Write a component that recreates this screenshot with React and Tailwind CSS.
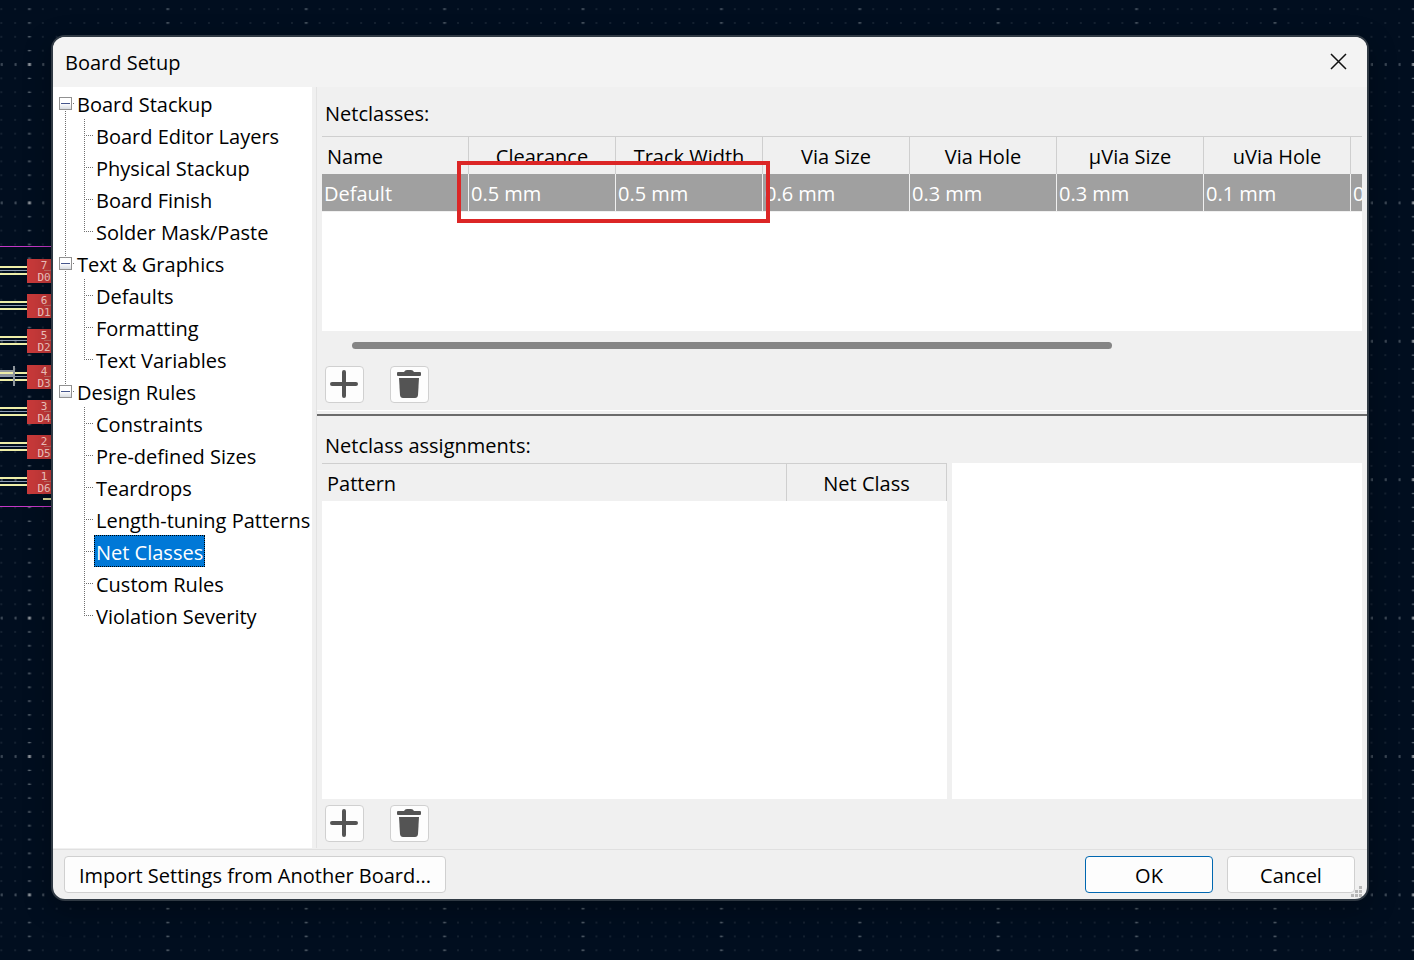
import React, { useState } from "react";

const treeData = [
  {
    title: "Board Stackup",
    items: [
      "Board Editor Layers",
      "Physical Stackup",
      "Board Finish",
      "Solder Mask/Paste",
    ],
  },
  {
    title: "Text & Graphics",
    items: ["Defaults", "Formatting", "Text Variables"],
  },
  {
    title: "Design Rules",
    items: [
      "Constraints",
      "Pre-defined Sizes",
      "Teardrops",
      "Length-tuning Patterns",
      "Net Classes",
      "Custom Rules",
      "Violation Severity",
    ],
  },
];

const netclassColumns = [
  { label: "Name", value: "Default" },
  { label: "Clearance", value: "0.5 mm" },
  { label: "Track Width", value: "0.5 mm" },
  { label: "Via Size", value: "0.6 mm" },
  { label: "Via Hole", value: "0.3 mm" },
  { label: "µVia Size", value: "0.3 mm" },
  { label: "uVia Hole", value: "0.1 mm" },
  { label: "", value: "0" },
];

const pads = [
  { pin: "7", net: "D0", y: 259 },
  { pin: "6", net: "D1", y: 294 },
  { pin: "5", net: "D2", y: 329 },
  { pin: "4", net: "D3", y: 365 },
  { pin: "3", net: "D4", y: 400 },
  { pin: "2", net: "D5", y: 435 },
  { pin: "1", net: "D6", y: 470 },
];

const steps = [1, 2, 3, 4, 5, 6, 7, 8, 9];
const PITCH = 13.84;

// PCB canvas behind the dialog
const BoardCanvas = () => (
  <svg aria-hidden="true" className="absolute inset-0 h-full w-full">
    <defs>
      <pattern
        id="minor"
        x="22.08"
        y="57.58"
        width={PITCH}
        height={PITCH}
        patternUnits="userSpaceOnUse"
      >
        <rect x="6.42" y="6.42" width="1" height="1" fill="#4b5764" />
      </pattern>
      <pattern
        id="major"
        x="22.5"
        y="58"
        width={PITCH * 10}
        height={PITCH * 10}
        patternUnits="userSpaceOnUse"
      >
        <rect x="5.5" y="5" width="3" height="3" fill="#8b9198" />
        {steps.map((s) => (
          <g key={s} fill="#66717c">
            <rect x="5.5" y={6 + s * PITCH} width="3" height="1" />
            <rect x={6.5 + s * PITCH} y="5" width="1" height="3" />
          </g>
        ))}
      </pattern>
    </defs>
    <rect width="100%" height="100%" fill="url(#minor)" />
    <rect width="100%" height="100%" fill="url(#major)" />
    <path d="M0 246.5H60M0 506.5H60" stroke="#c437c6" />
    <path d="M43 499H60" stroke="#dcdc9a" strokeWidth="2" />
    {pads.map((pad) => (
      <g key={pad.pin}>
        <path
          d={`M0 ${pad.y + 8}H27M0 ${pad.y + 15}H27`}
          stroke="#eeeea8"
          strokeWidth="2"
        />
        <path d={`M0 ${pad.y + 11.5}H27`} stroke="#8d9bb0" />
        <rect x="27" y={pad.y} width="26" height="24" fill="#c93a3a" />
        <path
          d={`M44 ${pad.y + 11.5}H50L53 ${pad.y + 10}`}
          stroke="#cf6f68"
          fill="none"
        />
        <g
          fill="#ffcfc8"
          fontFamily="DejaVu Sans Mono, monospace"
          fontSize="11"
          textAnchor="middle"
        >
          <text x="44" y={pad.y + 10}>
            {pad.pin}
          </text>
          <text x="44" y={pad.y + 22}>
            {pad.net}
          </text>
        </g>
      </g>
    ))}
    <path d="M0 371H14M14 366V386M0 375H14" stroke="#8f969c" strokeWidth="2" fill="none" />
  </svg>
);

const RootGutter = ({ first, last, open }) => (
  <svg width="24" height="32" className="block shrink-0">
    <defs>
      <linearGradient id="toggle" x1="0" y1="0" x2="0" y2="1">
        <stop offset="0.5" stopColor="#ffffff" />
        <stop offset="1" stopColor="#d5d9e0" />
      </linearGradient>
    </defs>
    <g stroke="#707070" strokeDasharray="1 1">
      {!first && <path d="M12.5 0V10" />}
      {!last && <path d="M12.5 24V32" />}
      <path d="M20 16.5H22" />
    </g>
    <rect x="6.5" y="10.5" width="12" height="12" fill="url(#toggle)" stroke="#919191" />
    <path d="M8 16.5H17" stroke="#45558c" />
    {!open && <path d="M12.5 12V21" stroke="#45558c" />}
  </svg>
);

const ChildGutter = ({ rootLine, last }) => (
  <svg width="41" height="32" className="block shrink-0">
    <g stroke="#707070" strokeDasharray="1 1">
      {rootLine && <path d="M12.5 0V32" />}
      <path d={last ? "M31.5 0V17" : "M31.5 0V32"} />
      <path d="M33 16.5H40" />
    </g>
  </svg>
);

const SettingsTree = () => {
  const [selected, setSelected] = useState("Net Classes");
  const [closed, setClosed] = useState({});

  return (
    <nav className="w-[259px] shrink-0 bg-white">
      <ul>
        {treeData.map((group, index) => {
          const lastGroup = index === treeData.length - 1;
          return (
            <li key={group.title}>
              <button
                type="button"
                aria-expanded={!closed[group.title]}
                onClick={() =>
                  setClosed({ ...closed, [group.title]: !closed[group.title] })
                }
                className="flex h-8 whitespace-nowrap"
              >
                <RootGutter
                  first={index === 0}
                  last={lastGroup}
                  open={!closed[group.title]}
                />
                <span className="pt-1">{group.title}</span>
              </button>
              {!closed[group.title] && (
                <ul>
                  {group.items.map((item, i) => (
                    <li key={item} className="flex h-8">
                      <ChildGutter
                        rootLine={!lastGroup}
                        last={i === group.items.length - 1}
                      />
                      <button
                        type="button"
                        onClick={() => setSelected(item)}
                        className={
                          selected === item
                            ? "whitespace-nowrap border border-dotted border-black bg-[#0078d7] px-px pt-1 leading-[26px] text-white"
                            : "whitespace-nowrap border border-transparent px-px pt-1 leading-[26px]"
                        }
                      >
                        {item}
                      </button>
                    </li>
                  ))}
                </ul>
              )}
            </li>
          );
        })}
      </ul>
    </nav>
  );
};

const GridButtons = () => (
  <div className="flex gap-[26px] pl-[3px]">
    <button
      type="button"
      aria-label="Add"
      className="flex h-[37px] w-[39px] rounded border border-[#d0d0d0] bg-[#fdfdfd] pl-1 pt-[3px]"
    >
      <svg width="28" height="28" viewBox="0 0 28 28">
        <path
          d="M14 2V26M2 14H26"
          stroke="#545454"
          strokeWidth="4"
          strokeLinecap="round"
        />
      </svg>
    </button>
    <button
      type="button"
      aria-label="Delete"
      className="flex h-[37px] w-[39px] rounded border border-[#d0d0d0] bg-[#fdfdfd] pl-[5px] pt-[2px]"
    >
      <svg width="26" height="30" viewBox="0 0 26 30" fill="#545454">
        <path d="M2 3H8Q9 1 11 1H15Q17 1 18 3H24Q25 3 25 4V6Q25 7 24 7H2Q1 7 1 6V4Q1 3 2 3Z" />
        <path d="M3 9H23L22 26Q21.700 29 19 29H7Q4.300 29 4 26Z" />
      </svg>
    </button>
  </div>
);

const NetclassTable = () => (
  <div className="relative">
    <div className="h-[195px] overflow-hidden border-t border-[#cfcfcf] bg-white">
      <table className="w-[1176px] table-fixed border-separate border-spacing-0">
        <thead>
          <tr className="h-[37px] bg-[#f0f0f0]">
            {netclassColumns.map((col, i) => (
              <th
                key={i}
                scope="col"
                className={
                  i === 0
                    ? "border-r border-[#cfcfcf] p-0 pl-[5px] pt-[2px] text-left font-normal"
                    : "border-r border-[#cfcfcf] p-0 pt-[2px] text-center font-normal"
                }
              >
                {col.label}
              </th>
            ))}
          </tr>
        </thead>
        <tbody>
          <tr className="h-[38px] text-white">
            {netclassColumns.map((col, i) => (
              <td
                key={i}
                className="border-b border-r border-[#f0f0f0] bg-[#a0a0a0] p-0 pl-[2px] pt-[2px]"
              >
                {col.value}
              </td>
            ))}
          </tr>
        </tbody>
      </table>
    </div>
    {/* highlight around clearance and track width */}
    <div className="pointer-events-none absolute left-[135px] top-[25px] h-[62px] w-[313px] border-4 border-[#dc2626]"></div>
  </div>
);

const App = () => {
  return (
    <div className="relative flex min-h-screen bg-[#010e1f] pb-[59px] pl-[51px] pr-[45px] pt-[35px] font-['Open_Sans','Noto_Sans',sans-serif] text-[20px] leading-[28px] text-black">
      <BoardCanvas />
      <div
        role="dialog"
        aria-labelledby="dialog-title"
        className="relative flex min-w-0 flex-1 flex-col overflow-hidden rounded-[14px] border-2 border-[#303a44] bg-[#f0f0f0] shadow-[0_8px_28px_0_rgba(0,0,0,0.3)]"
      >
        <header className="flex h-[50px] items-center justify-between bg-[#f3f3f3] pl-3 pr-5">
          <h1 id="dialog-title" className="pt-[2px]">
            Board Setup
          </h1>
          <button type="button" aria-label="Close" className="pb-[2px]">
            <svg width="17" height="17" viewBox="0 0 17 17">
              <path d="M1 1L16 16M16 1L1 16" stroke="#111" strokeWidth="1.5" />
            </svg>
          </button>
        </header>

        <div className="flex flex-1">
          <SettingsTree />
          <main className="ml-1 flex min-w-0 flex-1 flex-col border-l border-[#e3e3e3]">
            <section className="flex flex-col px-[5px]">
              <h2 className="pb-[8px] pl-[3px] pt-[13px]">Netclasses:</h2>
              <NetclassTable />
              <div className="pb-[17px] pl-[30px] pt-[11px]">
                <div className="h-[7px] w-[760px] max-w-full rounded-full bg-[#858585]"></div>
              </div>
              <GridButtons />
            </section>

            <div className="mt-[7px] h-[6px] border-b-2 border-t border-b-[#6b6b6b] border-t-white"></div>

            <section className="flex flex-1 flex-col px-[5px] pb-[6px]">
              <h2 className="pb-[3px] pl-[3px] pt-[16px]">
                Netclass assignments:
              </h2>
              <div className="flex flex-1 gap-[5px]">
                <div className="w-[625px] bg-white">
                  <table className="w-full table-fixed border-separate border-spacing-0 border-t border-[#cfcfcf]">
                    <thead>
                      <tr className="h-[37px] bg-[#f0f0f0]">
                        <th
                          scope="col"
                          className="border-r border-[#cfcfcf] p-0 pl-[5px] pt-[2px] text-left font-normal"
                        >
                          Pattern
                        </th>
                        <th
                          scope="col"
                          className="w-[160px] border-r border-[#cfcfcf] p-0 pt-[2px] text-center font-normal"
                        >
                          Net Class
                        </th>
                      </tr>
                    </thead>
                  </table>
                </div>
                <div className="flex-1 bg-white"></div>
              </div>
              <div className="pt-[6px]">
                <GridButtons />
              </div>
            </section>
          </main>
        </div>

        <footer className="relative mt-px flex items-center border-t border-[#e0e0e0] pb-[6px] pl-[11px] pr-3 pt-[6px]">
          <button
            type="button"
            className="h-[37px] w-[382px] whitespace-nowrap rounded border border-[#d0d0d0] bg-[#fdfdfd] pt-[2px]"
          >
            Import Settings from Another Board...
          </button>
          <button
            type="button"
            className="ml-auto h-[37px] w-32 rounded border border-[#0067b0] bg-[#fdfdfd] pt-[2px]"
          >
            OK
          </button>
          <button
            type="button"
            className="ml-[14px] h-[37px] w-32 rounded border border-[#d0d0d0] bg-[#fdfdfd] pt-[2px]"
          >
            Cancel
          </button>
          <svg
            aria-hidden="true"
            width="11"
            height="11"
            className="absolute bottom-[2px] right-[5px]"
            fill="#b8b8b8"
          >
            <path d="M8 0H11V3H8ZM4 4H7V7H4ZM8 4H11V7H8ZM0 8H3V11H0ZM4 8H7V11H4ZM8 8H11V11H8Z" />
          </svg>
        </footer>
      </div>
    </div>
  );
};

export default App;
